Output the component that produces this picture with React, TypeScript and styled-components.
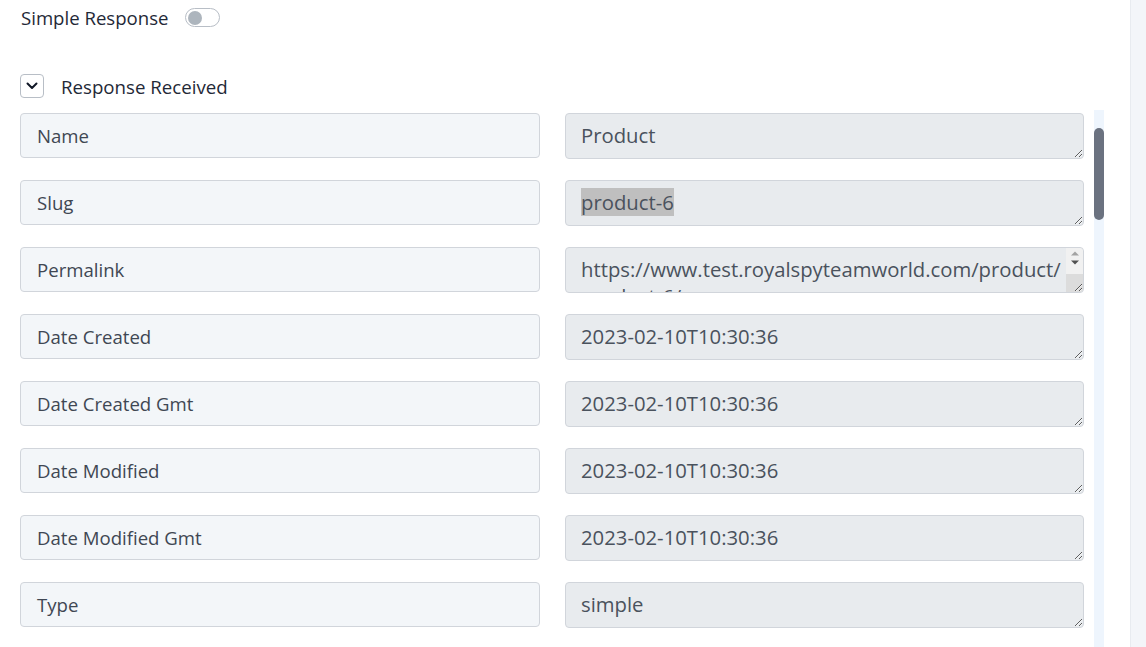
import styled, { createGlobalStyle } from 'styled-components';

const GlobalStyle = createGlobalStyle`
  html, body {
    margin: 0;
    padding: 0;
    background: #ffffff;
    font-family: "Open Sans", Lato, sans-serif;
    color: #374151;
  }
  * {
    box-sizing: border-box;
  }
`;

type Field = { label: string; value: string; selected?: boolean; long?: boolean };

const fields: Field[] = [
  { label: 'Name', value: 'Product' },
  { label: 'Slug', value: 'product-6', selected: true },
  { label: 'Permalink', value: 'https://www.test.royalspyteamworld.com/product/|product-6/', long: true },
  { label: 'Date Created', value: '2023-02-10T10:30:36' },
  { label: 'Date Created Gmt', value: '2023-02-10T10:30:36' },
  { label: 'Date Modified', value: '2023-02-10T10:30:36' },
  { label: 'Date Modified Gmt', value: '2023-02-10T10:30:36' },
  { label: 'Type', value: 'simple' },
  { label: 'Status', value: 'publish' },
  { label: 'Featured', value: 'false' },
  { label: 'Catalog Visibility', value: 'visible' },
];

// splits long values at "|" so the browser may wrap there
function renderValue(f: Field) {
  if (f.selected) return <Selected>{f.value}</Selected>;
  const parts = f.value.split('|');
  return parts.map((p, i) => (
    <span key={i}>
      {p}
      {i < parts.length - 1 && <wbr />}
    </span>
  ));
}

function App() {
  return (
    <Page>
      <GlobalStyle />
      <Main>
        <ToggleRow>
          <span>Simple Response</span>
          <Switch>
            <Knob />
          </Switch>
        </ToggleRow>
        <SectionHeader>
          <ChevronBox>
            <svg width="12" height="8" viewBox="0 0 12 8" fill="none">
              <path d="M1.5 1.5L6 6l4.5-4.5" stroke="#111827" strokeWidth="2" strokeLinecap="round" strokeLinejoin="round" />
            </svg>
          </ChevronBox>
          <span>Response Received</span>
        </SectionHeader>
        <ListArea>
          <FieldList>
            {fields.map((f) => (
              <FieldRow key={f.label}>
                <Label>{f.label}</Label>
                <Value $long={f.long}>
                  {renderValue(f)}
                  {f.long && (
                    <InnerScroll>
                      <Arrows>
                        <svg width="10" height="18" viewBox="0 0 10 18">
                          <path d="M1 6.5L5 2.5l4 4z" fill="#a3a3a3" />
                          <path d="M1 11.5h8l-4 4z" fill="#505050" />
                        </svg>
                      </Arrows>
                      <Corner />
                    </InnerScroll>
                  )}
                </Value>
              </FieldRow>
            ))}
          </FieldList>
          <Track>
            <Thumb />
          </Track>
        </ListArea>
      </Main>
      <SideStrip />
    </Page>
  );
}

export default App;

const Page = styled.div`
  display: flex;
  height: 100vh;
  overflow: hidden;
`;

const Main = styled.div`
  flex: 1;
  display: flex;
  flex-direction: column;
  padding-left: 20px;
  min-width: 0;
`;

const SideStrip = styled.div`
  width: 16px;
  background: #f3f5f9;
  border-left: 1px solid #e8ebf0;
`;

const ToggleRow = styled.div`
  display: flex;
  align-items: center;
  gap: 16px;
  height: 35px;
  padding-left: 1px;
  font-size: 18.6px;
  color: #1f2937;
`;

const Switch = styled.div`
  width: 35px;
  height: 19px;
  border: 1px solid #b8bec6;
  border-radius: 10px;
  display: flex;
  align-items: center;
  padding-left: 2px;
`;

const Knob = styled.div`
  width: 14px;
  height: 14px;
  border-radius: 50%;
  background: #adb5bd;
`;

const SectionHeader = styled.div`
  display: flex;
  align-items: center;
  gap: 17px;
  margin-top: 39px;
  height: 24px;
  font-size: 18.7px;
  color: #1f2937;
`;

const ChevronBox = styled.div`
  width: 24px;
  height: 24px;
  border: 1px solid #b8bec6;
  border-radius: 4px;
  display: flex;
  align-items: center;
  justify-content: center;
`;

const ListArea = styled.div`
  margin-top: 12px;
  flex: 1;
  min-height: 0;
  display: flex;
  gap: 10px;
`;

const FieldList = styled.div`
  width: 1064px;
  overflow: hidden;
  padding-top: 3px;
  display: flex;
  flex-direction: column;
  gap: 21px;
`;

const Track = styled.div`
  width: 10px;
  background: #eef5fd;
  padding-top: 18px;
`;

const Thumb = styled.div`
  height: 92px;
  border-radius: 5px;
  background: #6b7280;
`;

const FieldRow = styled.div`
  display: flex;
  gap: 25px;
  flex-shrink: 0;
`;

const Label = styled.div`
  width: 520px;
  height: 45px;
  flex-shrink: 0;
  background: #f3f6f9;
  border: 1px solid #d1d5db;
  border-radius: 4px;
  padding: 0 16px;
  display: flex;
  align-items: center;
  font-size: 18.6px;
  color: #3f4753;
`;

const Value = styled.div<{ $long?: boolean }>`
  position: relative;
  width: 519px;
  height: 46px;
  flex-shrink: 0;
  background: #e8ebee;
  border: 1px solid #d1d5db;
  border-radius: 4px;
  padding: 8px ${(p) => (p.$long ? '17px' : '15px')} 9px 15px;
  font-size: 20.3px;
  line-height: 27px;
  color: #4a525d;
  resize: vertical;
  overflow: hidden;
`;

const InnerScroll = styled.div`
  position: absolute;
  top: 0;
  right: 0;
  bottom: 0;
  width: 17px;
  display: flex;
  flex-direction: column;
  border-top-right-radius: 3px;
  overflow: hidden;
`;

const Arrows = styled.div`
  height: 26px;
  background: #f1f1f1;
  display: flex;
  justify-content: center;
  padding-top: 1px;
`;

const Corner = styled.div`
  flex: 1;
  background: #dcdcdc;
`;

const Selected = styled.span`
  background: #bfbfbf;
`;
